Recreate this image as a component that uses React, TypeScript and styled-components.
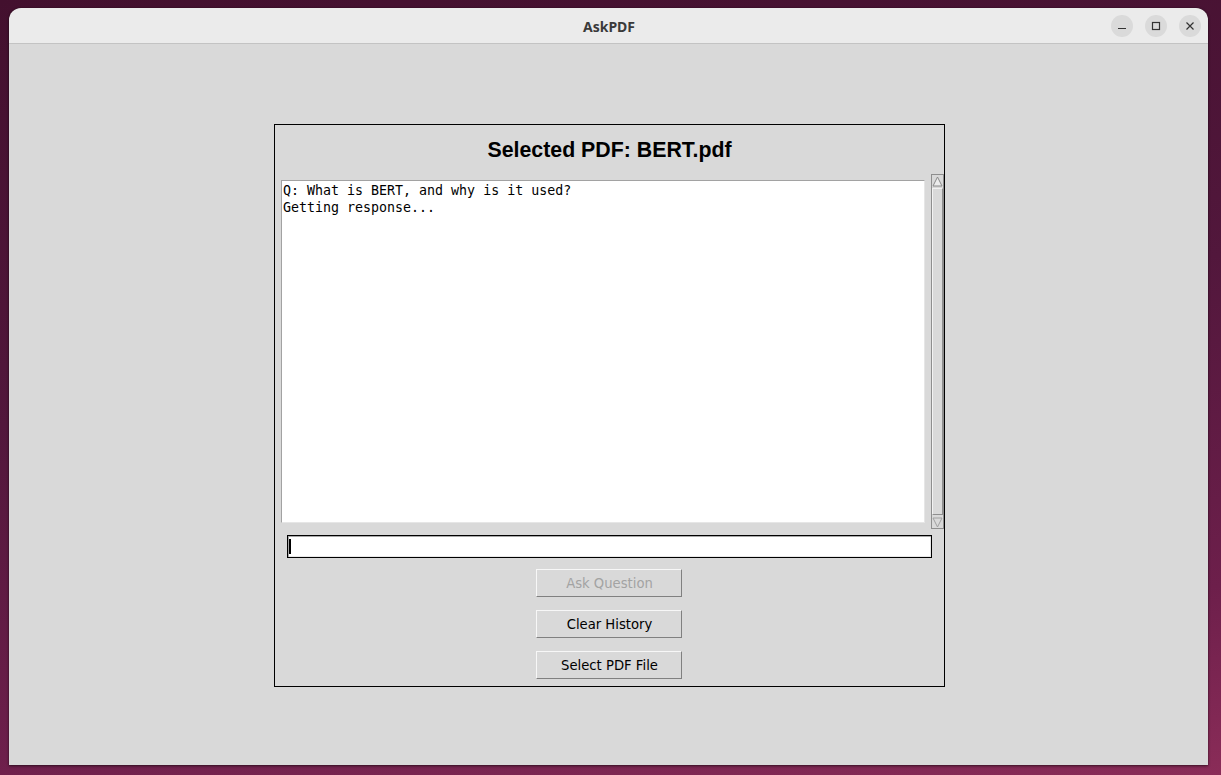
import React from "react";
import styled, { createGlobalStyle } from "styled-components";

const Global = createGlobalStyle`
  html, body { margin: 0; padding: 0; }
  body { font-family: "DejaVu Sans", sans-serif; }
  * { box-sizing: border-box; }
`;

const Desktop = styled.div`
  width: 1221px;
  height: 775px;
  padding: 8px 13px 10px 9px;
  display: flex;
  background: linear-gradient(172deg, #43102e 0%, #52173c 45%, #6d1f4b 80%, #8a2c58 100%);
`;

const Window = styled.div`
  flex: 1;
  display: flex;
  flex-direction: column;
  border-radius: 12px 12px 0 0;
  overflow: hidden;
  box-shadow: 0 1px 3px rgba(0, 0, 0, 0.55), 0 0 1px rgba(0, 0, 0, 0.6);
`;

const TitleBar = styled.div`
  height: 36px;
  flex: none;
  background: #ebebeb;
  border-bottom: 1px solid #c3c3c3;
  display: grid;
  grid-template-columns: 1fr auto 1fr;
  align-items: center;
`;

const Title = styled.div`
  grid-column: 2;
  font-family: "Noto Sans", sans-serif;
  font-weight: 700;
  font-size: 14px;
  color: #3a3a3a;
  padding-left: 1px;
  padding-top: 1px;
`;

const Controls = styled.div`
  grid-column: 3;
  justify-self: end;
  display: flex;
  gap: 12px;
  padding-right: 7px;
  padding-top: 1px;
`;

const CtrlBtn = styled.div`
  width: 22px;
  height: 22px;
  border-radius: 50%;
  background: #dadada;
  display: flex;
  align-items: center;
  justify-content: center;
`;

const Body = styled.div`
  flex: 1;
  background: #d9d9d9;
  display: flex;
  align-items: center;
  justify-content: center;
  padding: 2px 0 0 2px;
`;

const Panel = styled.div`
  width: 671px;
  border: 1px solid #000;
  display: flex;
  flex-direction: column;
  align-items: center;
  padding-bottom: 7px;
`;

const Heading = styled.div`
  height: 49px;
  display: flex;
  align-items: center;
  justify-content: center;
  font-family: "Liberation Sans", Arial, sans-serif;
  font-weight: 700;
  font-size: 21.33px;
  color: #000;
  padding-top: 1px;
`;

const TextRow = styled.div`
  width: 100%;
  height: 355px;
  display: flex;
  align-items: stretch;
  gap: 6px;
  padding-left: 6px;
`;

const TextBox = styled.div`
  width: 644px;
  margin: 6px 0;
  background: #fff;
  border-top: 1px solid #a2a2a2;
  border-left: 1px solid #a2a2a2;
  border-bottom: 1px solid #e6e6e6;
  border-right: 1px solid #e6e6e6;
  padding: 1px 1px;
  font-family: "DejaVu Sans Mono", monospace;
  font-size: 13.3px;
  line-height: 17px;
  color: #000;
  white-space: pre;
`;

const Scrollbar = styled.div`
  width: 13px;
  display: flex;
  flex-direction: column;
  border: 1px solid #8e8e8e;
  background: #d9d9d9;
`;

const Arrow = styled.div`
  height: 12px;
  flex: none;
  display: flex;
  align-items: center;
  justify-content: center;
`;

const Thumb = styled.div`
  flex: 1;
  margin: 1px 0;
  border-top: 1px solid #f2f2f2;
  border-left: 1px solid #f2f2f2;
  border-bottom: 1px solid #8e8e8e;
  border-right: 1px solid #8e8e8e;
  background: #d9d9d9;
`;

const Entry = styled.div`
  width: 645px;
  height: 23px;
  margin: 6px 1px 0 0;
  border: 1px solid #000;
  background: #fff;
  box-shadow: inset 1px 1px 0 #a8a8a8, inset -1px -1px 0 #e8e8e8;
  display: flex;
  align-items: center;
  padding-left: 1px;
`;

const Caret = styled.span`
  width: 2px;
  height: 15px;
  background: #000;
`;

const Buttons = styled.div`
  display: flex;
  flex-direction: column;
  gap: 13px;
  margin: 11px 1px 0 0;
`;

const Button = styled.button<{ $disabled?: boolean }>`
  width: 146px;
  height: 28px;
  padding: 0 0 0 1px;
  background: #d9d9d9;
  border: 1px solid;
  border-color: #f7f7f7 #808080 #808080 #f7f7f7;
  font-family: "DejaVu Sans", sans-serif;
  font-size: 13.2px;
  color: ${(p) => (p.$disabled ? "#a3a3a3" : "#000")};
  display: flex;
  align-items: center;
  justify-content: center;
`;

const UpArrow = () => (
  <svg width="11" height="11" viewBox="0 0 11 11">
    <polygon points="5.5,1 10,10 1,10" fill="#ececec" stroke="#8a8a8a" strokeWidth="1" />
  </svg>
);

const DownArrow = () => (
  <svg width="11" height="11" viewBox="0 0 11 11">
    <polygon points="1,1 10,1 5.5,10" fill="#d9d9d9" stroke="#a0a0a0" strokeWidth="1" />
  </svg>
);

export default function App() {
  return (
    <>
      <Global />
      <Desktop>
        <Window>
          <TitleBar>
            <Title>AskPDF</Title>
            <Controls>
              <CtrlBtn>
                <svg width="10" height="10" viewBox="0 0 10 10">
                  <line x1="1" y1="7.5" x2="9" y2="7.5" stroke="#333" strokeWidth="1.2" />
                </svg>
              </CtrlBtn>
              <CtrlBtn>
                <svg width="10" height="10" viewBox="0 0 10 10">
                  <rect x="1.5" y="1.5" width="7" height="7" fill="none" stroke="#333" strokeWidth="1.2" />
                </svg>
              </CtrlBtn>
              <CtrlBtn>
                <svg width="10" height="10" viewBox="0 0 10 10">
                  <path d="M1.5 1.5 L8.5 8.5 M8.5 1.5 L1.5 8.5" stroke="#333" strokeWidth="1.2" />
                </svg>
              </CtrlBtn>
            </Controls>
          </TitleBar>
          <Body>
            <Panel>
              <Heading>Selected PDF: BERT.pdf</Heading>
              <TextRow>
                <TextBox>{"Q: What is BERT, and why is it used?\nGetting response..."}</TextBox>
                <Scrollbar>
                  <Arrow>
                    <UpArrow />
                  </Arrow>
                  <Thumb />
                  <Arrow>
                    <DownArrow />
                  </Arrow>
                </Scrollbar>
              </TextRow>
              <Entry>
                <Caret />
              </Entry>
              <Buttons>
                <Button $disabled>Ask Question</Button>
                <Button>Clear History</Button>
                <Button>Select PDF File</Button>
              </Buttons>
            </Panel>
          </Body>
        </Window>
      </Desktop>
    </>
  );
}
